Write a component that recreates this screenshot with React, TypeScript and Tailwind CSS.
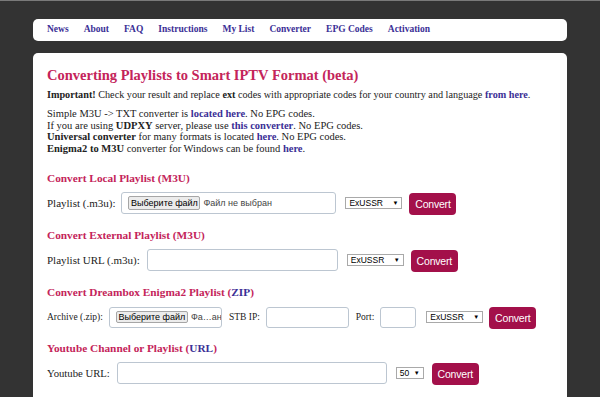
import React from 'react';

const navItems = ['News', 'About', 'FAQ', 'Instructions', 'My List', 'Converter', 'EPG Codes', 'Activation'];

function Select({ value, width }: { value: string; width: string }) {
  return (
    <div
      className={`${width} h-[12px] flex items-center justify-between border border-[#a9a9a9] bg-white px-[3px] font-['Liberation_Sans'] text-[8.5px] text-black leading-none`}
    >
      <span>{value}</span>
      <span className="text-[6px]">▼</span>
    </div>
  );
}

function ConvertButton() {
  return (
    <button className="h-[22px] w-[47px] rounded-[4px] bg-[#a3104a] font-['Liberation_Sans'] text-[10.5px] tracking-[-0.2px] text-white">
      Convert
    </button>
  );
}

function FileInput({ width, text, btnH }: { width: string; text: string; btnH: string }) {
  return (
    <div className={`${width} h-full flex items-center gap-[3px] overflow-hidden whitespace-nowrap rounded-[3px] border border-[#bcc6d1] bg-white pl-[6px]`}>
      <div
        className={`${btnH} w-[72px] shrink-0 flex items-center justify-center rounded-[2px] border border-[#a6a6a6] bg-[#ececec] font-['Liberation_Sans'] text-[9px] text-black leading-none`}
      >
        Выберите файл
      </div>
      <span className="font-['Liberation_Sans'] text-[9px] text-[#444] leading-none">{text}</span>
    </div>
  );
}

function TextBox({ width }: { width: string }) {
  return <div className={`${width} h-full rounded-[3px] border border-[#bcc6d1] bg-white`} />;
}

export default function App() {
  return (
    <div className="min-h-screen border-t border-[#7a7a7a] bg-[#333333] font-['Liberation_Serif'] text-[#222]">
      <div className="px-[33px] pt-[18px]">
        {/* Top navigation */}
        <nav className="flex h-[22px] items-center gap-[15px] rounded-[5px] bg-white px-[14px]">
          {navItems.map((item) => (
            <a key={item} className="text-[9.5px] font-bold leading-none text-[#3b2f96]">
              {item}
            </a>
          ))}
        </nav>

        {/* Converter panel */}
        <div className="mt-[12px] h-[400px] rounded-t-[5px] bg-white px-[14px] pt-[14px]">
          <h1 className="text-[14.5px] font-bold leading-[17px] text-[#c4245a]">
            Converting Playlists to Smart IPTV Format (beta)
          </h1>
          <p className="mt-[5px] text-[10.2px] leading-[12px]">
            <b>Important!</b> Check your result and replace <b>ext</b> codes with appropriate codes for your country and
            language <b className="text-[#3b2f96]">from here</b>.
          </p>
          <p className="mt-[7px] text-[10.5px] leading-[11.5px]">
            Simple M3U -&gt; TXT converter is <b className="text-[#3b2f96]">located here</b>. No EPG codes.
            <br />
            If you are using <b>UDPXY</b> server, please use <b className="text-[#3b2f96]">this converter</b>. No EPG codes.
            <br />
            <b>Universal converter</b> for many formats is located <b className="text-[#3b2f96]">here</b>. No EPG codes.
            <br />
            <b>Enigma2 to M3U</b> converter for Windows can be found <b className="text-[#3b2f96]">here</b>.
          </p>

          {/* Local playlist */}
          <h2 className="mt-[17px] text-[11.3px] font-bold leading-[14px] text-[#c4245a]">Convert Local Playlist (M3U)</h2>
          <div className="mt-[7px] flex h-[22px] items-center">
            <span className="text-[11px]">Playlist (.m3u):</span>
            <div className="ml-[6px] h-full">
              <FileInput width="w-[215px]" text="Файл не выбран" btnH="h-[14px]" />
            </div>
            <div className="ml-[9px]">
              <Select value="ExUSSR" width="w-[57px]" />
            </div>
            <div className="ml-[7px]">
              <ConvertButton />
            </div>
          </div>

          {/* External playlist */}
          <h2 className="mt-[14px] text-[11.3px] font-bold leading-[14px] text-[#c4245a]">Convert External Playlist (M3U)</h2>
          <div className="mt-[7px] flex h-[22px] items-center">
            <span className="text-[11px]">Playlist URL (.m3u):</span>
            <div className="ml-[7px] h-full">
              <TextBox width="w-[191px]" />
            </div>
            <div className="ml-[9px]">
              <Select value="ExUSSR" width="w-[57px]" />
            </div>
            <div className="ml-[7px]">
              <ConvertButton />
            </div>
          </div>

          {/* Enigma2 */}
          <h2 className="mt-[14px] text-[11.3px] font-bold leading-[14px] text-[#c4245a]">
            Convert Dreambox Enigma2 Playlist (<span className="text-[#3b2f96]">ZIP</span>)
          </h2>
          <div className="mt-[7px] flex h-[22px] items-center">
            <span className="text-[9.5px]">Archive (.zip):</span>
            <div className="ml-[6px] h-[21px]">
              <FileInput width="w-[113px]" text="Фа…ан" btnH="h-[12px]" />
            </div>
            <span className="ml-[7px] text-[9.5px]">STB IP:</span>
            <div className="ml-[6px] h-[21px]">
              <TextBox width="w-[83px]" />
            </div>
            <span className="ml-[7px] text-[9.5px]">Port:</span>
            <div className="ml-[6px] h-[21px]">
              <TextBox width="w-[36px]" />
            </div>
            <div className="ml-[10px]">
              <Select value="ExUSSR" width="w-[57px]" />
            </div>
            <div className="ml-[6px]">
              <ConvertButton />
            </div>
          </div>

          {/* Youtube */}
          <h2 className="mt-[13px] text-[11.3px] font-bold leading-[14px] text-[#c4245a]">
            Youtube Channel or Playlist (<span className="text-[#3b2f96]">URL</span>)
          </h2>
          <div className="mt-[7px] flex h-[22px] items-center">
            <span className="text-[10.7px]">Youtube URL:</span>
            <div className="ml-[7px] h-full">
              <TextBox width="w-[270px]" />
            </div>
            <div className="ml-[9px]">
              <Select value="50" width="w-[28px]" />
            </div>
            <div className="ml-[8px]">
              <ConvertButton />
            </div>
          </div>
        </div>
      </div>
    </div>
  );
}
